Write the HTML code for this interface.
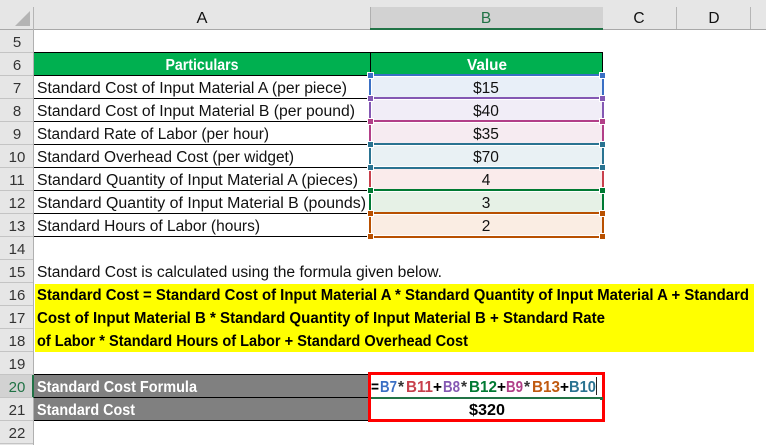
<!DOCTYPE html>
<html><head><meta charset="utf-8"><style>
html,body{margin:0;padding:0;background:#fff}
svg{display:block}
text{font-family:"Liberation Sans",sans-serif;font-size:15.5px;fill:#111}
.b{font-weight:bold;fill:#000}
.w{fill:#fff;font-weight:bold}
.h{fill:#333;font-size:15px}
.f{font-weight:bold;font-size:15.5px}
</style></head><body>
<svg width="766" height="445" viewBox="0 0 766 445" xmlns="http://www.w3.org/2000/svg" shape-rendering="crispEdges">
<rect width="766" height="445" fill="#fff"/>
<!-- header -->
<rect x="0" y="0" width="766" height="30" fill="#e6e6e6"/>
<rect x="370" y="7" width="233" height="21" fill="#d2d2d2"/>
<rect x="0" y="29" width="766" height="1" fill="#a8a8a8"/>
<rect x="370" y="28" width="233" height="2" fill="#217346"/>
<rect x="33" y="7" width="1" height="23" fill="#b5b5b5"/>
<rect x="370" y="7" width="1" height="21" fill="#b0b0b0"/>
<rect x="676" y="7" width="1" height="22" fill="#b5b5b5"/>
<rect x="750" y="7" width="1" height="22" fill="#b5b5b5"/>
<polygon points="15,26 30,26 30,11" fill="#b4b4b4" shape-rendering="auto"/>
<text x="202" y="23" text-anchor="middle" textLength="11" lengthAdjust="spacingAndGlyphs">A</text>
<text x="486" y="23" text-anchor="middle" style="fill:#217346">B</text>
<text x="639" y="23" text-anchor="middle">C</text>
<text x="714" y="23" text-anchor="middle">D</text>
<!-- row header col -->
<rect x="0" y="30" width="33" height="415" fill="#e6e6e6"/>
<rect x="33" y="30" width="1" height="415" fill="#b0b0b0"/>
<rect x="0" y="375" width="33" height="23" fill="#d2d2d2"/>
<rect x="32" y="375" width="2" height="23" fill="#217346"/>
<g fill="#c4c4c4">
<rect x="0" y="52" width="33" height="1"/><rect x="0" y="75" width="33" height="1"/><rect x="0" y="98" width="33" height="1"/><rect x="0" y="121" width="33" height="1"/><rect x="0" y="144" width="33" height="1"/><rect x="0" y="167" width="33" height="1"/><rect x="0" y="190" width="33" height="1"/><rect x="0" y="213" width="33" height="1"/><rect x="0" y="236" width="33" height="1"/><rect x="0" y="259" width="33" height="1"/><rect x="0" y="282" width="33" height="1"/><rect x="0" y="305" width="33" height="1"/><rect x="0" y="328" width="33" height="1"/><rect x="0" y="351" width="33" height="1"/><rect x="0" y="374" width="33" height="1"/><rect x="0" y="397" width="33" height="1"/><rect x="0" y="420" width="33" height="1"/><rect x="0" y="443" width="33" height="1"/>
</g>
<g text-anchor="middle">
<text class="h" x="17" y="47">5</text><text class="h" x="17" y="70">6</text><text class="h" x="17" y="93">7</text><text class="h" x="17" y="116">8</text><text class="h" x="17" y="139">9</text><text class="h" x="17" y="162">10</text><text class="h" x="17" y="185">11</text><text class="h" x="17" y="208">12</text><text class="h" x="17" y="231">13</text><text class="h" x="17" y="254">14</text><text class="h" x="17" y="277">15</text><text class="h" x="17" y="300">16</text><text class="h" x="17" y="323">17</text><text class="h" x="17" y="346">18</text><text class="h" x="17" y="369">19</text><text class="h" x="17" y="392" style="fill:#217346">20</text><text class="h" x="17" y="415">21</text><text class="h" x="17" y="438">22</text>
</g>
<!-- green header -->
<rect x="34" y="52" width="569" height="23" fill="#00b050"/>
<rect x="34" y="52" width="569" height="1" fill="#000"/>
<rect x="370" y="52" width="1" height="23" fill="#000"/>
<rect x="602" y="52" width="1" height="23" fill="#000"/>
<text class="w" x="202" y="70" text-anchor="middle" textLength="73" lengthAdjust="spacingAndGlyphs">Particulars</text>
<text class="w" x="487" y="70" text-anchor="middle" textLength="40" lengthAdjust="spacingAndGlyphs">Value</text>
<!-- col A lines -->
<g fill="#000">
<rect x="34" y="75" width="336" height="1"/><rect x="34" y="98" width="336" height="1"/><rect x="34" y="121" width="336" height="1"/><rect x="34" y="144" width="336" height="1"/><rect x="34" y="167" width="336" height="1"/><rect x="34" y="190" width="336" height="1"/><rect x="34" y="213" width="336" height="1"/><rect x="34" y="236" width="336" height="1"/>
</g>
<g>
<text x="37" y="93" textLength="310" lengthAdjust="spacingAndGlyphs">Standard Cost of Input Material A (per piece)</text>
<text x="37" y="116" textLength="318" lengthAdjust="spacingAndGlyphs">Standard Cost of Input Material B (per pound)</text>
<text x="37" y="139" textLength="232" lengthAdjust="spacingAndGlyphs">Standard Rate of Labor (per hour)</text>
<text x="37" y="162" textLength="257" lengthAdjust="spacingAndGlyphs">Standard Overhead Cost (per widget)</text>
<text x="37" y="185" textLength="321" lengthAdjust="spacingAndGlyphs">Standard Quantity of Input Material A (pieces)</text>
<text x="37" y="208" textLength="329" lengthAdjust="spacingAndGlyphs">Standard Quantity of Input Material B (pounds)</text>
<text x="37" y="231" textLength="223" lengthAdjust="spacingAndGlyphs">Standard Hours of Labor (hours)</text>
<text x="37" y="277" textLength="405" lengthAdjust="spacingAndGlyphs">Standard Cost is calculated using the formula given below.</text>
</g>
<!-- B fills -->
<rect x="372" y="77" width="230" height="20" fill="#e8eff8"/>
<rect x="372" y="100" width="230" height="20" fill="#f1edf7"/>
<rect x="372" y="123" width="230" height="20" fill="#f6ebf1"/>
<rect x="372" y="146" width="230" height="20" fill="#e9f1f4"/>
<rect x="372" y="169" width="230" height="20" fill="#faebeb"/>
<rect x="372" y="192" width="230" height="20" fill="#e6f1e6"/>
<rect x="372" y="215" width="230" height="20" fill="#faede3"/>
<!-- coloured borders -->
<g>
<rect x="370" y="74" width="233" height="2" fill="#3a6fc4"/>
<rect x="369" y="78" width="2" height="17" fill="#3a6fc4"/><rect x="602" y="78" width="2" height="17" fill="#3a6fc4"/>
<rect x="370" y="97" width="233" height="2" fill="#8458b3"/>
<rect x="369" y="101" width="2" height="17" fill="#8458b3"/><rect x="602" y="101" width="2" height="17" fill="#8458b3"/>
<rect x="370" y="120" width="233" height="2" fill="#b23f88"/>
<rect x="369" y="124" width="2" height="17" fill="#b23f88"/><rect x="602" y="124" width="2" height="17" fill="#b23f88"/>
<rect x="370" y="143" width="233" height="2" fill="#2a7391"/>
<rect x="369" y="147" width="2" height="17" fill="#2a7391"/><rect x="602" y="147" width="2" height="17" fill="#2a7391"/>
<rect x="370" y="167" width="233" height="2" fill="#2a7391"/>
<rect x="369" y="171" width="2" height="16" fill="#c8404c"/><rect x="602" y="171" width="2" height="16" fill="#c8404c"/>
<rect x="370" y="189" width="233" height="2" fill="#007a33"/>
<rect x="369" y="194" width="2" height="16" fill="#007a33"/><rect x="602" y="194" width="2" height="16" fill="#007a33"/>
<rect x="370" y="212" width="233" height="2" fill="#b85000"/>
<rect x="369" y="217" width="2" height="16" fill="#b85000"/><rect x="602" y="217" width="2" height="16" fill="#b85000"/>
<rect x="370" y="236" width="233" height="2" fill="#b85000"/>
</g>
<!-- handles -->
<g stroke="#fff" stroke-width="1">
<rect x="367.5" y="72.5" width="6" height="6" fill="#3a6fc4"/><rect x="599.5" y="72.5" width="6" height="6" fill="#3a6fc4"/>
<rect x="367.5" y="95.5" width="6" height="6" fill="#8458b3"/><rect x="599.5" y="95.5" width="6" height="6" fill="#8458b3"/>
<rect x="367.5" y="118.5" width="6" height="6" fill="#b23f88"/><rect x="599.5" y="118.5" width="6" height="6" fill="#b23f88"/>
<rect x="367.5" y="141.5" width="6" height="6" fill="#2a7391"/><rect x="599.5" y="141.5" width="6" height="6" fill="#2a7391"/>
<rect x="367.5" y="164.5" width="6" height="6" fill="#2a7391"/><rect x="599.5" y="164.5" width="6" height="6" fill="#2a7391"/>
<rect x="367.5" y="187.5" width="6" height="6" fill="#007a33"/><rect x="599.5" y="187.5" width="6" height="6" fill="#007a33"/>
<rect x="367.5" y="210.5" width="6" height="6" fill="#b85000"/><rect x="599.5" y="210.5" width="6" height="6" fill="#b85000"/>
<rect x="367.5" y="233.5" width="6" height="6" fill="#b85000"/><rect x="599.5" y="233.5" width="6" height="6" fill="#b85000"/>
</g>
<g text-anchor="middle">
<text x="486" y="93">$15</text><text x="486" y="116">$40</text><text x="486" y="139">$35</text><text x="486" y="162">$70</text><text x="486" y="185">4</text><text x="486" y="208">3</text><text x="486" y="231">2</text>
</g>
<!-- yellow -->
<rect x="35" y="284" width="719" height="68" fill="#ffff00"/>
<text class="b" x="37" y="300" textLength="712" lengthAdjust="spacingAndGlyphs">Standard Cost = Standard Cost of Input Material A * Standard Quantity of Input Material A + Standard</text>
<text class="b" x="37" y="323" textLength="568" lengthAdjust="spacingAndGlyphs">Cost of Input Material B * Standard Quantity of Input Material B + Standard Rate</text>
<text class="b" x="37" y="346" textLength="431" lengthAdjust="spacingAndGlyphs">of Labor * Standard Hours of Labor + Standard Overhead Cost</text>
<!-- grey rows -->
<rect x="34" y="374" width="335" height="46" fill="#808080"/>
<rect x="34" y="374" width="335" height="1" fill="#000"/>
<rect x="34" y="397" width="335" height="1" fill="#000"/>
<rect x="34" y="420" width="335" height="1" fill="#000"/>
<text class="w" x="37" y="392" textLength="160" lengthAdjust="spacingAndGlyphs">Standard Cost Formula</text>
<text class="w" x="37" y="415" textLength="98" lengthAdjust="spacingAndGlyphs">Standard Cost</text>
<!-- result box -->
<rect x="369.5" y="373.5" width="234" height="47" fill="#fff" stroke="#ff0000" stroke-width="3"/>
<rect x="371" y="397" width="229" height="2" fill="#217346"/>
<rect x="600" y="397" width="3" height="3" fill="#217346"/>
<text class="f" x="371" y="392" textLength="8" lengthAdjust="spacingAndGlyphs" style="fill:#000">=</text>
<text class="f" x="380" y="392" textLength="17" lengthAdjust="spacingAndGlyphs" style="fill:#3a6fc4">B7</text>
<text class="f" x="398" y="392" style="fill:#333">*</text>
<text class="f" x="406" y="392" textLength="27" lengthAdjust="spacingAndGlyphs" style="fill:#c8404c">B11</text>
<text class="f" x="433" y="392" textLength="9" lengthAdjust="spacingAndGlyphs" style="fill:#000">+</text>
<text class="f" x="443" y="392" textLength="17" lengthAdjust="spacingAndGlyphs" style="fill:#8458b3">B8</text>
<text class="f" x="461" y="392" style="fill:#333">*</text>
<text class="f" x="469" y="392" textLength="28" lengthAdjust="spacingAndGlyphs" style="fill:#007a33">B12</text>
<text class="f" x="497" y="392" textLength="9" lengthAdjust="spacingAndGlyphs" style="fill:#000">+</text>
<text class="f" x="506" y="392" textLength="17" lengthAdjust="spacingAndGlyphs" style="fill:#b23f88">B9</text>
<text class="f" x="524" y="392" style="fill:#333">*</text>
<text class="f" x="532" y="392" textLength="28" lengthAdjust="spacingAndGlyphs" style="fill:#c05a10">B13</text>
<text class="f" x="560" y="392" textLength="9" lengthAdjust="spacingAndGlyphs" style="fill:#000">+</text>
<text class="f" x="569" y="392" textLength="27" lengthAdjust="spacingAndGlyphs" style="fill:#2a7391">B10</text>
<rect x="596" y="377" width="1" height="18" fill="#222"/>
<text class="b" x="487" y="415" text-anchor="middle" textLength="36" lengthAdjust="spacingAndGlyphs">$320</text>
</svg>
</body></html>
